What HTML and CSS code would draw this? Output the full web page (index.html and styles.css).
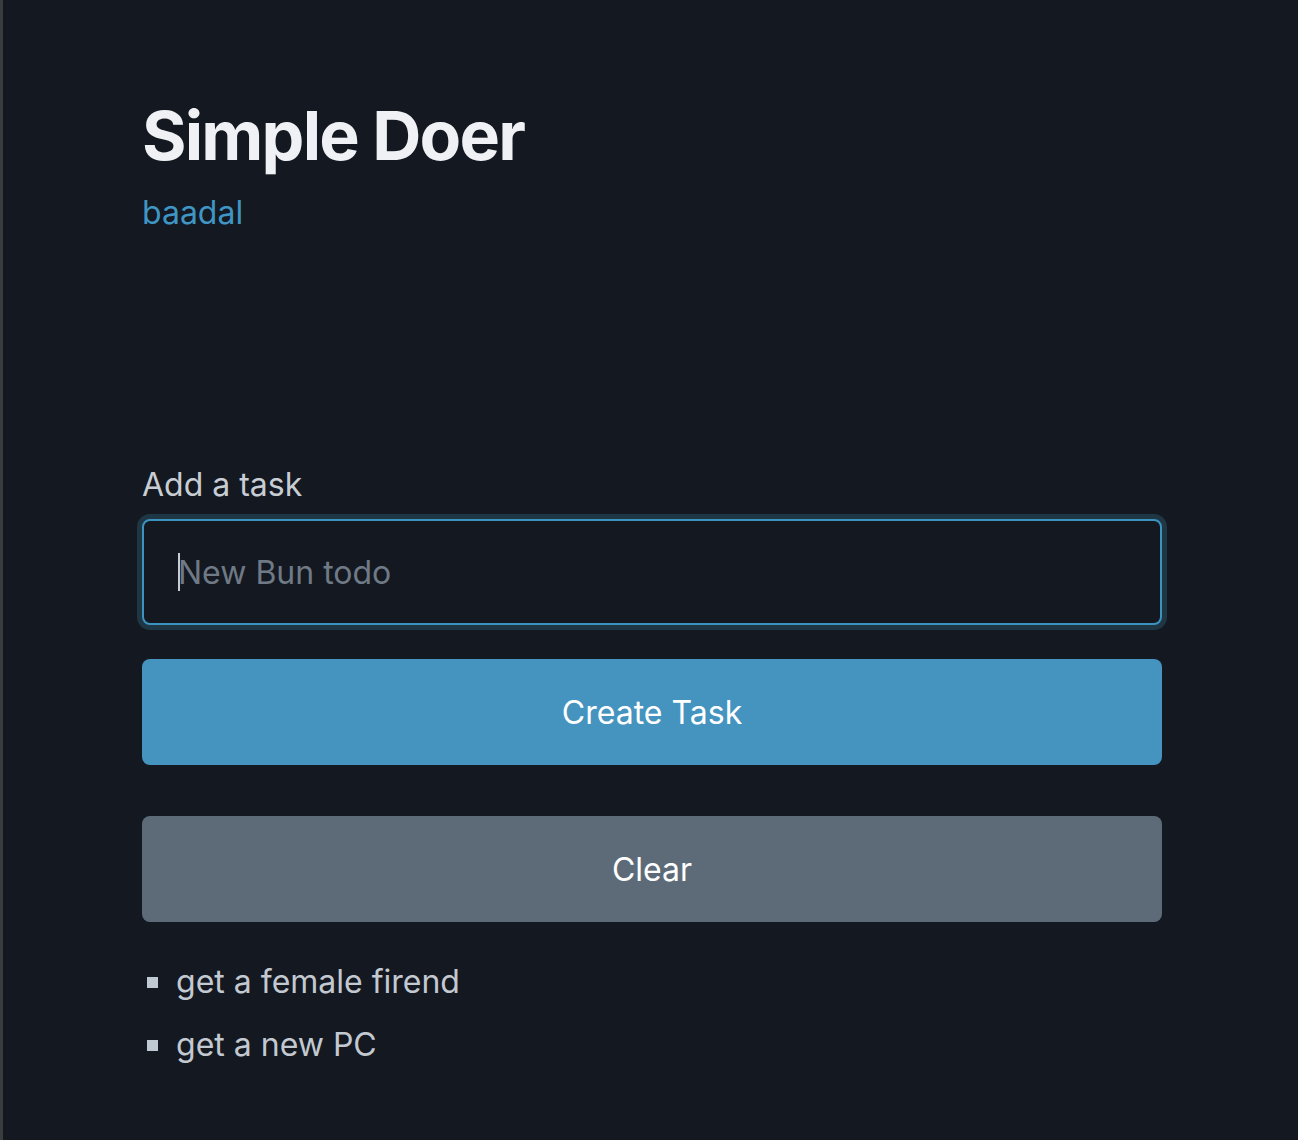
FILE: index.html
```html
<!DOCTYPE html>
<html lang="en">
<head>
<meta charset="utf-8">
<title>Simple Doer</title>
<link rel="stylesheet" href="styles.css">
</head>
<body>
<div class="edge"></div>
<main class="container">
  <header class="head">
    <h1 class="title">Simple Doer</h1>
    <a class="author" href="#">baadal</a>
  </header>
  <form class="form">
    <label class="label" for="task">Add a task</label>
    <div class="field">
      <span class="caret"></span>
      <input id="task" class="input" type="text" placeholder="New Bun todo">
    </div>
    <button type="button" class="btn btn-primary">Create Task</button>
    <button type="button" class="btn btn-secondary">Clear</button>
  </form>
  <ul class="tasks">
    <li class="task">get a female firend</li>
    <li class="task">get a new PC</li>
  </ul>
</main>
</body>
</html>
```
FILE: styles.css
```css
html, body {
  margin: 0;
  padding: 0;
  background: #141820;
  height: 100%;
}
body {
  display: flex;
  font-family: Inter, "Noto Sans", sans-serif;
  overflow: hidden;
}
.edge {
  flex: 0 0 3px;
  background: #3b3c3d;
}
.container {
  flex: 0 0 1020px;
  margin-left: 139px;
  padding-top: 94px;
}
.title {
  margin: 0;
  font-size: 68px;
  line-height: 82px;
  font-weight: 700;
  color: #eff1f4;
  letter-spacing: -1.8px;
}
.author {
  display: block;
  margin-top: 17px;
  font-size: 32px;
  line-height: 40px;
  color: #3f95c4;
  text-decoration: none;
}
.form {
  display: flex;
  flex-direction: column;
  margin-top: 232px;
}
.label {
  font-size: 32px;
  line-height: 40px;
  color: #c8cdd4;
  margin-bottom: 14px;
}
.field {
  position: relative;
  height: 106px;
  margin-bottom: 34px;
}
.input {
  box-sizing: border-box;
  width: 100%;
  height: 106px;
  margin: 0;
  padding: 0 34px;
  border: 2px solid #3d93bf;
  border-radius: 8px;
  background: #141820;
  box-shadow: 0 0 0 5px #1f3644;
  font-family: inherit;
  font-size: 32px;
  color: #c8cdd4;
  outline: none;
}
.input::placeholder {
  color: #6f7a86;
}
.caret {
  position: absolute;
  left: 36px;
  top: 34px;
  width: 2px;
  height: 38px;
  background: #c8cdd4;
}
.btn {
  box-sizing: border-box;
  width: 100%;
  height: 106px;
  margin: 0;
  border: none;
  border-radius: 8px;
  font-family: inherit;
  font-size: 32px;
  color: #ffffff;
  cursor: pointer;
}
.btn-primary {
  background: #4494bf;
  margin-bottom: 51px;
}
.btn-secondary {
  background: #5d6b79;
}
.tasks {
  list-style: none;
  margin: 40px 0 0;
  padding: 0;
}
.task {
  display: flex;
  align-items: center;
  font-size: 32px;
  line-height: 40px;
  color: #c3c9d1;
  margin-bottom: 23px;
}
.task::before {
  content: "";
  width: 11px;
  height: 11px;
  background: #c0c8d2;
  margin-left: 5px;
  margin-right: 18px;
}
```
